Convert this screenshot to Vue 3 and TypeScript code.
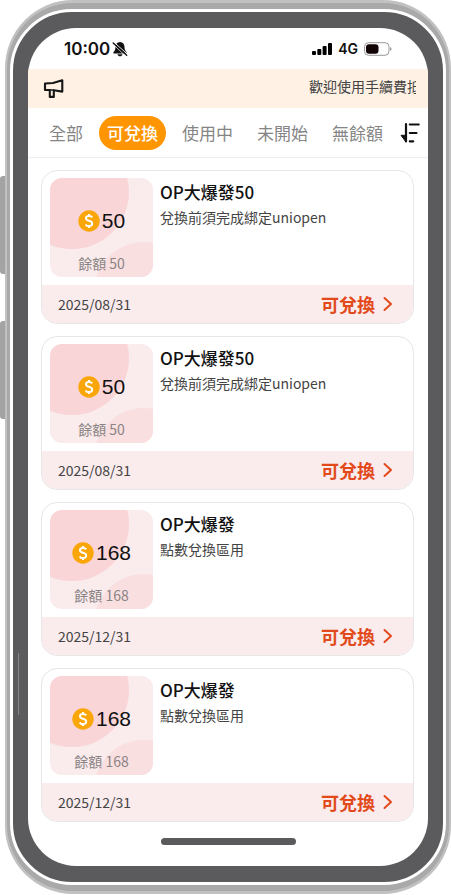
<script setup lang="ts">
import { ref } from 'vue'

interface Coupon {
  id: number
  title: string
  note: string
  amount: number
  expires: string
}

const tabs: string[] = ['全部', '可兌換', '使用中', '未開始', '無餘額']
const activeTab = ref('可兌換')

const coupons: Coupon[] = [
  { id: 1, title: 'OP大爆發50', note: '兌換前須完成綁定uniopen', amount: 50, expires: '2025/08/31' },
  { id: 2, title: 'OP大爆發50', note: '兌換前須完成綁定uniopen', amount: 50, expires: '2025/08/31' },
  { id: 3, title: 'OP大爆發', note: '點數兌換區用', amount: 168, expires: '2025/12/31' },
  { id: 4, title: 'OP大爆發', note: '點數兌換區用', amount: 168, expires: '2025/12/31' },
]
</script>

<template>
  <div class="stage">
    <div class="shell">
      <div class="rim">
        <div class="bezel">
          <div class="screen">
            <header class="status">
              <div class="clock">
                <span>10:00</span>
                <svg width="16" height="16" viewBox="0 0 16 16" aria-hidden="true">
                  <path d="M8 1C5 1.200 3.600 3.200 3.500 5.700 3.400 8.800 2.700 9.800 1.400 11.300V12.500H14.600V11.300C13.300 9.800 12.600 8.800 12.500 5.700 12.400 3.200 11 1.200 8 1Z" fill="#111" />
                  <path d="M5.500 13.300H10.500C10.200 14.700 9.200 15.300 8 15.300S5.800 14.700 5.500 13.300Z" fill="#111" />
                  <path d="M1.700 1 15.500 13.300" stroke="#fff" stroke-width="1" />
                  <path d="M0.800 3 13.500 14.800" stroke="#fff" stroke-width="0.800" />
                  <path d="M1.200 1.900 14.700 14.200" stroke="#111" stroke-width="1.400" stroke-linecap="round" />
                </svg>
              </div>
              <div class="radio">
                <svg width="20" height="14" viewBox="0 0 20 14" aria-hidden="true">
                  <rect x="0" y="9" width="4" height="4" rx="1" />
                  <rect x="5.300" y="7" width="4" height="6" rx="1" />
                  <rect x="10.600" y="4" width="4" height="9" rx="1" />
                  <rect x="16" y="1" width="4" height="12" rx="1" />
                </svg>
                <span>4G</span>
                <svg width="28" height="14" viewBox="0 0 28 14" aria-hidden="true">
                  <rect x="0.500" y="0.700" width="24.500" height="12.600" rx="4" fill="#fff" stroke="#999" />
                  <rect x="2" y="2.200" width="12.500" height="9.600" rx="3" fill="#120305" />
                  <path d="M26.300 5V9C27.800 8.500 27.800 5.500 26.300 5Z" fill="#777" />
                </svg>
              </div>
            </header>

            <div class="notice">
              <svg width="22" height="22" viewBox="0 0 22 22" aria-hidden="true">
                <path d="M2 5.500 10 5 19.300 2.300V13.600L10.800 12.300V18.900H6.800V12H2Z" fill="none" stroke="#161616" stroke-width="2.100" stroke-linejoin="round" />
                <path d="M6.800 12H10.800" stroke="#161616" stroke-width="1.600" />
              </svg>
              <p class="ticker">歡迎使用手續費抵</p>
            </div>

            <nav class="tabs">
              <div class="tab-list">
                <button
                  v-for="tab in tabs"
                  :key="tab"
                  type="button"
                  class="tab"
                  :class="{ active: tab === activeTab }"
                  @click="activeTab = tab"
                >{{ tab }}</button>
              </div>
              <button type="button" class="sort" aria-label="排序">
                <svg width="20" height="22" viewBox="0 0 20 22" aria-hidden="true">
                  <path d="M6 2V19.500" stroke="#111" stroke-width="2.200" stroke-linecap="round" />
                  <path d="M1 13.300H6V20Z" fill="#111" stroke="#111" stroke-linejoin="round" />
                  <path d="M9.800 2.500H18.700M9.800 11H16.500M9.800 19.300H13.200" stroke="#111" stroke-width="2.200" stroke-linecap="round" />
                </svg>
              </button>
            </nav>

            <main class="list">
              <article v-for="coupon in coupons" :key="coupon.id" class="card">
                <div class="card-body">
                  <div class="thumb">
                    <svg class="thumb-art" viewBox="0 0 103 99" aria-hidden="true">
                      <circle cx="22" cy="14" r="57" fill="#fad5d7" />
                      <circle cx="94" cy="114" r="50" fill="#f9dfe0" />
                    </svg>
                    <div class="amount">
                      <svg width="22" height="22" viewBox="0 0 22 22" aria-hidden="true">
                        <circle cx="11" cy="11" r="10.700" fill="#faa508" />
                        <path d="M14.200 7.400C13.500 6.300 12.400 5.900 11 5.900 9.200 5.900 8 6.800 8 8.200 8 11.600 14.200 10 14.200 13.600 14.200 15.200 12.900 16.100 11 16.100 9.500 16.100 8.300 15.600 7.600 14.400M11 3.900V6M11 16V18.100" fill="none" stroke="#fff" stroke-width="2" />
                      </svg>
                      <span>{{ coupon.amount }}</span>
                    </div>
                    <div class="balance">餘額 {{ coupon.amount }}</div>
                  </div>
                  <div class="info">
                    <h2>{{ coupon.title }}</h2>
                    <p>{{ coupon.note }}</p>
                  </div>
                </div>
                <footer class="card-foot">
                  <time>{{ coupon.expires }}</time>
                  <a href="#" class="redeem" @click.prevent>
                    <span>可兌換</span>
                    <svg width="10" height="16" viewBox="0 0 10 16" aria-hidden="true">
                      <path d="M1.500 2 8 8 1.500 14" fill="none" stroke="#e24a1b" stroke-width="2" stroke-linecap="round" stroke-linejoin="round" />
                    </svg>
                  </a>
                </footer>
              </article>
            </main>

            <div class="home-bar"></div>
          </div>
        </div>
      </div>
    </div>
    <span class="side-key volume-up"></span>
    <span class="side-key volume-down"></span>
    <span class="seam"></span>
  </div>
</template>

<style>
body {
  background: #fff;
}
</style>

<style scoped>
.stage {
  position: relative;
  padding: 0 0 2px 5px;
  font-family: "Noto Sans CJK TC", "Noto Sans", sans-serif;
  color: #444;
}

.stage * {
  box-sizing: border-box;
}

button {
  border: 0;
  padding: 0;
  background: none;
  font: inherit;
  color: inherit;
  cursor: pointer;
}

.shell {
  padding: 3px 2px;
  border-radius: 68px;
  background: #c1c1c1;
}

.rim {
  padding: 6px 3px;
  border-radius: 66px;
  background: #a9a9a9;
}

.bezel {
  padding: 16px 15px;
  border: 3px solid #fff;
  border-radius: 62px;
  background: #5b5b5d;
}

.screen {
  overflow: hidden;
  border-radius: 48px;
  background: #fff;
}

.status {
  display: flex;
  align-items: center;
  justify-content: space-between;
  height: 41px;
  padding: 0 36px;
  font-family: Inter, sans-serif;
  font-weight: 600;
  color: #111;
}

.clock {
  display: flex;
  align-items: center;
  gap: 2px;
  font-size: 17px;
}

.radio {
  display: flex;
  align-items: center;
  gap: 6px;
  font-size: 14px;
}

.notice {
  display: flex;
  align-items: center;
  justify-content: space-between;
  height: 39px;
  padding: 0 12px 0 15px;
  background: #fff2e4;
}

.ticker {
  flex: 0 1 107px;
  overflow: hidden;
  margin: 0;
  padding-bottom: 6px;
  font-size: 14px;
  line-height: 20px;
  white-space: nowrap;
}

.tabs {
  display: flex;
  align-items: center;
  justify-content: space-between;
  height: 50px;
  padding: 0 8px 0 13px;
  border-bottom: 1px solid #eee;
}

.tab-list {
  display: flex;
  gap: 8px;
}

.tab {
  height: 34px;
  padding: 0 8px;
  border-radius: 17px;
  font-size: 17px;
  line-height: 34px;
  white-space: nowrap;
  color: #858585;
}

.tab.active {
  background: #ff9500;
  color: #fff;
  font-weight: 500;
}

.sort svg {
  display: block;
}

.list {
  display: grid;
  gap: 12px;
  padding: 12px 14px 0 13px;
}

.card {
  overflow: hidden;
  border: 1px solid #e6e6e6;
  border-radius: 16px;
}

.card-body {
  display: flex;
  gap: 7px;
  padding: 7px 8px 8px;
}

.thumb {
  position: relative;
  flex: none;
  display: flex;
  flex-direction: column;
  align-items: center;
  justify-content: space-between;
  width: 103px;
  height: 99px;
  padding: 31px 0 4px;
  overflow: hidden;
  border-radius: 12px;
  background: #faebec;
}

.thumb-art {
  position: absolute;
  inset: 0;
}

.amount {
  position: relative;
  display: flex;
  align-items: center;
  gap: 2px;
  font-family: "Liberation Sans", Arial, sans-serif;
  font-size: 21px;
  line-height: 24px;
  color: #111;
}

.balance {
  position: relative;
  font-size: 14px;
  line-height: 20px;
  color: #8a8484;
}

.info h2 {
  margin: 0;
  font-size: 17px;
  font-weight: 500;
  line-height: 28px;
  color: #111;
}

.info p {
  margin: 0;
  font-size: 14px;
  line-height: 22px;
}

.card-foot {
  display: flex;
  align-items: center;
  justify-content: space-between;
  height: 38px;
  padding: 0 20px 0 16px;
  background: #faeced;
  font-size: 14px;
}

.redeem {
  display: flex;
  align-items: center;
  gap: 8px;
  color: #e24a1b;
  font-size: 18px;
  font-weight: 700;
  text-decoration: none;
}

.home-bar {
  width: 135px;
  height: 7px;
  margin: 16px auto 21px;
  border-radius: 4px;
  background: #5b5b5d;
}

.side-key {
  position: absolute;
  left: 0;
  width: 5px;
  height: 98px;
  border-radius: 3px 0 0 3px;
  background: #a3a3a3;
}

.volume-up {
  top: 176px;
}

.volume-down {
  top: 321px;
}

.seam {
  position: absolute;
  top: 653px;
  left: 18px;
  width: 1px;
  height: 62px;
  background: #858585;
}
</style>
